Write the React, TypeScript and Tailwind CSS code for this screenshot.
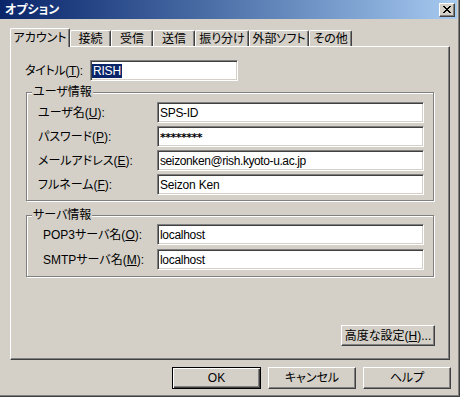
import React from "react";

const FONT =
  "[font-family:'Liberation_Sans','Noto_Sans_CJK_JP',sans-serif] [font-feature-settings:'palt'] text-[12px] leading-[14px] text-black";

function Field({ children, className = "" }: { children?: React.ReactNode; className?: string }) {
  return (
    <div
      className={`h-[21px] bg-white border border-t-[#808080] border-l-[#808080] border-r-white border-b-white shadow-[inset_1px_1px_0_#404040,inset_-1px_-1px_0_#d4d0c8] flex items-center overflow-hidden whitespace-nowrap ${className}`}
    >
      {children}
    </div>
  );
}

function Btn({ children, className = "", def = false }: { children: React.ReactNode; className?: string; def?: boolean }) {
  return def ? (
    <div
      className={`flex items-center justify-center bg-[#d4d0c8] border border-black shadow-[inset_1px_1px_0_#fff,inset_-1px_-1px_0_#404040,inset_-2px_-2px_0_#808080] ${className}`}
    >
      {children}
    </div>
  ) : (
    <div
      className={`flex items-center justify-center bg-[#d4d0c8] border border-t-white border-l-white border-r-[#404040] border-b-[#404040] shadow-[inset_-1px_-1px_0_#808080] ${className}`}
    >
      {children}
    </div>
  );
}

function Tab({ label, active = false, w }: { label: string; active?: boolean; w: string }) {
  return active ? (
    <div
      className={`${w} h-[19px] mb-[-1px] relative z-10 bg-[#d4d0c8] border-l border-t border-l-white border-t-white border-r border-r-[#404040] shadow-[inset_-1px_0_0_#808080] rounded-t-[2px] flex items-center justify-center pb-[1px]`}
    >
      {label}
    </div>
  ) : (
    <div
      className={`${w} h-[16px] bg-[#d4d0c8] border-l border-t border-l-white border-t-white border-r border-r-[#404040] shadow-[inset_-1px_0_0_#808080] rounded-t-[2px] flex items-center justify-center`}
    >
      {label}
    </div>
  );
}

function Group({ title, children, className = "" }: { title: string; children: React.ReactNode; className?: string }) {
  return (
    <div
      className={`relative ml-[15px] w-[408px] border border-[#808080] shadow-[inset_1px_1px_0_#fff,1px_1px_0_#fff] flex flex-col ${className}`}
    >
      <span className="absolute left-[5px] top-[-8px] px-[1px] bg-[#d4d0c8] leading-[14px]">{title}</span>
      {children}
    </div>
  );
}

export default function App() {
  return (
    <div
      className={`${FONT} w-[460px] h-[397px] bg-[#d4d0c8] border-r border-b border-r-[#404040] border-b-[#404040] shadow-[inset_-1px_-1px_0_#808080] flex flex-col overflow-hidden`}
    >
      {/* Title bar */}
      <div className="mr-[2px] h-[19px] bg-gradient-to-r from-[#0a246a] to-[#a6caf0] flex items-center justify-between pr-[2px]">
        <span className="ml-[5px] font-bold text-white">オプション</span>
        <div className="w-[16px] h-[14px] bg-[#d4d0c8] border border-t-white border-l-white border-r-[#404040] border-b-[#404040] shadow-[inset_-1px_-1px_0_#808080] flex items-center justify-center">
          <svg width="8" height="7" viewBox="0 0 8 7" shapeRendering="crispEdges">
            <path
              fill="#000"
              d="M0 0h2v1H0zM6 0h2v1H6zM1 1h2v1H1zM5 1h2v1H5zM2 2h4v1H2zM3 3h2v1H3zM2 4h4v1H2zM1 5h2v1H1zM5 5h2v1H5zM0 6h2v1H0zM6 6h2v1H6z"
            />
          </svg>
        </div>
      </div>

      {/* Tabs */}
      <div className="mt-[9px] ml-[10px] h-[18px] flex items-end">
        <Tab label="アカウント" active w="w-[60px]" />
        <Tab label="接続" w="w-[41px]" />
        <Tab label="受信" w="w-[42px]" />
        <Tab label="送信" w="w-[42px]" />
        <Tab label="振り分け" w="w-[54px]" />
        <Tab label="外部ソフト" w="w-[60px]" />
        <Tab label="その他" w="w-[43px]" />
      </div>

      {/* Panel */}
      <div className="ml-[10px] w-[440px] h-[314px] border border-t-white border-l-white border-r-[#404040] border-b-[#404040] shadow-[inset_-1px_-1px_0_#808080] flex flex-col">
        <div className="mt-[13px] flex items-center h-[21px]">
          <div className="ml-[14px] w-[65px] tracking-[-0.3px]">
            タイトル(<span className="underline">T</span>):
          </div>
          <Field className="w-[148px] pl-[1px]">
            <span className="bg-[#0a246a] text-white px-[1px] leading-[14px] tracking-[-0.2px]">RISH</span>
          </Field>
        </div>

        <Group title="ユーザ情報" className="mt-[11px] pt-[9px] pb-[5px] pl-[11px] gap-[3px]">
          <div className="flex items-center h-[21px]">
            <div className="w-[119px]">
              ユーザ名(<span className="underline">U</span>):
            </div>
            <Field className="w-[267px] pl-[2px] tracking-[-0.3px]">SPS-ID</Field>
          </div>
          <div className="flex items-center h-[21px]">
            <div className="w-[119px]">
              パスワード(<span className="underline">P</span>):
            </div>
            <Field className="w-[267px] pl-[2px]">
              <span className="[font-family:'DejaVu_Sans',sans-serif] text-[11px] font-bold tracking-[-0.5px] pt-[3px]">
                ********
              </span>
            </Field>
          </div>
          <div className="flex items-center h-[21px]">
            <div className="w-[119px]">
              メールアドレス(<span className="underline">E</span>):
            </div>
            <Field className="w-[267px] pl-[2px] tracking-[-0.4px]">seizonken@rish.kyoto-u.ac.jp</Field>
          </div>
          <div className="flex items-center h-[21px]">
            <div className="w-[119px]">
              フルネーム(<span className="underline">F</span>):
            </div>
            <Field className="w-[267px] pl-[2px] tracking-[-0.2px]">Seizon Ken</Field>
          </div>
        </Group>

        <Group title="サーバ情報" className="mt-[14px] pt-[8px] pb-[6px] pl-[16px] gap-[4px]">
          <div className="flex items-center h-[21px]">
            <div className="w-[114px]">
              POP3サーバ名(<span className="underline">O</span>):
            </div>
            <Field className="w-[267px] pl-[2px] tracking-[-0.3px]">localhost</Field>
          </div>
          <div className="flex items-center h-[21px]">
            <div className="w-[114px]">
              SMTPサーバ名(<span className="underline">M</span>):
            </div>
            <Field className="w-[267px] pl-[2px] tracking-[-0.3px]">localhost</Field>
          </div>
        </Group>

        <Btn className="mt-[48px] ml-[330px] w-[94px] h-[21px]">
          <span>
            高度な設定(<span className="underline">H</span>)...
          </span>
        </Btn>
      </div>

      {/* Bottom buttons */}
      <div className="mt-[7px] ml-[172px] flex gap-[7px]">
        <Btn def className="w-[89px] h-[22px]">
          OK
        </Btn>
        <Btn className="w-[88px] h-[22px]">キャンセル</Btn>
        <Btn className="w-[88px] h-[22px]">ヘルプ</Btn>
      </div>
    </div>
  );
}
